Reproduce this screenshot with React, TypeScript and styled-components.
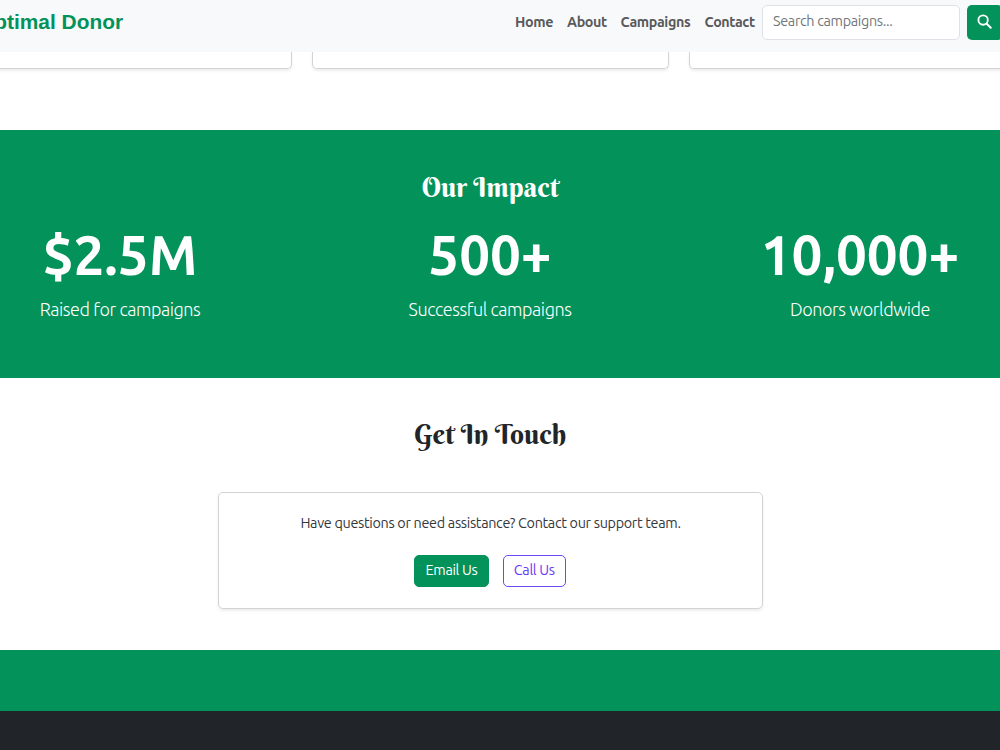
import React from "react";
import styled, { createGlobalStyle } from "styled-components";

const green = "#03925a";
const dark = "#212529";

const GlobalStyle = createGlobalStyle`
  *, *::before, *::after { box-sizing: border-box; }
  body {
    margin: 0;
    background: #fff;
    color: ${dark};
    font-family: "Ubuntu", "Open Sans", "Noto Sans", sans-serif;
    font-size: 14.4px;
    letter-spacing: -0.32px;
    overflow: hidden;
  }
`;

const Page = styled.div`
  display: flex;
  flex-direction: column;
  height: 750px;
  overflow: hidden;
`;

const Navbar = styled.header`
  display: flex;
  align-items: flex-start;
  justify-content: space-between;
  flex: none;
  width: 1003px;
  height: 51.5px;
  padding-top: 5px;
  background: #f8f9fb;
`;

const Brand = styled.a`
  margin-left: -22px;
  color: ${green};
  font: 700 20.9px/34px "Liberation Sans", Arial, sans-serif;
  letter-spacing: 0;
  white-space: nowrap;
`;

const NavTools = styled.div`
  display: flex;
  align-items: center;
  height: 34.5px;
`;

const NavLinks = styled.nav`
  display: flex;
  gap: 14px;
  margin-right: 7px;
`;

const NavLink = styled.a<{ $width: number }>`
  width: ${(p) => p.$width}px;
  color: #595a5c;
  font-weight: 700;
  font-size: 14.3px;
  letter-spacing: -0.37px;
  line-height: 34px;
  white-space: nowrap;
`;

const SearchInput = styled.input`
  width: 198px;
  height: 34.5px;
  margin-right: 7px;
  padding: 0 10px 2px;
  border: 1px solid #dee2e6;
  border-radius: 5px;
  background: #fff;
  font: inherit;
  letter-spacing: -0.33px;
  &::placeholder { color: #72777b; opacity: 1; }
`;

const SearchButton = styled.button`
  display: grid;
  place-items: center;
  width: 36px;
  height: 34.5px;
  padding: 0 1px 2px 0;
  border: 0;
  border-radius: 5px;
  background: ${green};
  color: #fff;
`;

const CampaignRow = styled.section`
  display: grid;
  grid-template-columns: repeat(3, 356.5px);
  gap: 20.5px;
  flex: none;
  height: 78.5px;
  margin-left: -64.8px;
`;

const CampaignCard = styled.article`
  height: 17.5px;
  border: 1px solid #d3d3d4;
  border-top: 0;
  border-radius: 0 0 5px 5px;
  box-shadow: 0 2px 3px rgba(0, 0, 0, 0.075);
`;

const Impact = styled.section`
  flex: none;
  height: 247.5px;
  padding-top: 41px;
  background: ${green};
  color: #fff;
`;

const Heading = styled.h2`
  width: 980.5px;
  margin: 0;
  font: 400 27.4px/33px "Berkshire Swash", "Liberation Serif", "Times New Roman", serif;
  letter-spacing: 0;
  text-align: center;
`;

const Stats = styled.div`
  display: grid;
  grid-template-columns: repeat(3, 370px);
  width: 1110px;
  margin: 16px 0 0 -65px;
  text-align: center;
`;

const StatValue = styled.div`
  font-size: 54.7px;
  font-weight: 700;
  letter-spacing: 0;
  line-height: 70px;
`;

const StatLabel = styled.div`
  margin-top: 6px;
  font-size: 18px;
  font-weight: 300;
  letter-spacing: -0.42px;
  line-height: 26px;
`;

const ContactSection = styled.section`
  flex: none;
  height: 272.5px;
  padding-top: 40.3px;
`;

const ContactCard = styled.div`
  display: flex;
  flex-direction: column;
  align-items: center;
  width: 545px;
  height: 117px;
  margin: 41.2px 0 0 218px;
  padding-top: 19px;
  border: 1px solid #d3d3d4;
  border-radius: 5px;
  box-shadow: 0 2px 3px rgba(0, 0, 0, 0.075);
`;

const ContactText = styled.p`
  margin: 0;
  color: #34383c;
  line-height: 22px;
  white-space: nowrap;
`;

const ButtonRow = styled.div`
  display: flex;
  gap: 13.5px;
  margin: 21px 1px 0 0;
`;

const ActionButton = styled.button<{ $outline?: boolean }>`
  display: flex;
  align-items: center;
  justify-content: center;
  width: ${(p) => (p.$outline ? 63.5 : 75)}px;
  height: 32px;
  padding: 0 0 1px;
  border: 1px solid ${(p) => (p.$outline ? "#6d49f5" : green)};
  border-radius: 5px;
  background: ${(p) => (p.$outline ? "#fff" : green)};
  color: ${(p) => (p.$outline ? "#6d38f2" : "#fff")};
  font: inherit;
  letter-spacing: -0.33px;
  white-space: nowrap;
`;

const GreenBand = styled.section`
  flex: none;
  height: 61.4px;
  background: ${green};
`;

const Footer = styled.footer`
  flex: 1;
  background: ${dark};
`;

const stats = [
  { value: "$2.5M", label: "Raised for campaigns" },
  { value: "500+", label: "Successful campaigns" },
  { value: "10,000+", label: "Donors worldwide" },
];

const links = [
  { label: "Home", width: 38 },
  { label: "About", width: 39.5 },
  { label: "Campaigns", width: 70 },
  { label: "Contact", width: 50.5 },
];

export default function App() {
  return (
    <Page>
      <GlobalStyle />
      <Navbar>
        <Brand>Optimal Donor</Brand>
        <NavTools>
          <NavLinks>
            {links.map((l) => (
              <NavLink key={l.label} $width={l.width}>{l.label}</NavLink>
            ))}
          </NavLinks>
          <SearchInput placeholder="Search campaigns..." />
          <SearchButton aria-label="Search">
            <svg width="15" height="15" viewBox="0 0 16 16" fill="none" stroke="currentColor" strokeLinecap="round">
              <circle cx="6.5" cy="6.5" r="5" strokeWidth="2" />
              <path d="M10.4 10.4 14.6 14.6" strokeWidth="2.2" />
            </svg>
          </SearchButton>
        </NavTools>
      </Navbar>
      <CampaignRow>
        <CampaignCard />
        <CampaignCard />
        <CampaignCard />
      </CampaignRow>
      <Impact>
        <Heading>Our Impact</Heading>
        <Stats>
          {stats.map((s) => (
            <div key={s.label}>
              <StatValue>{s.value}</StatValue>
              <StatLabel>{s.label}</StatLabel>
            </div>
          ))}
        </Stats>
      </Impact>
      <ContactSection>
        <Heading>Get In Touch</Heading>
        <ContactCard>
          <ContactText>Have questions or need assistance? Contact our support team.</ContactText>
          <ButtonRow>
            <ActionButton>Email Us</ActionButton>
            <ActionButton $outline>Call Us</ActionButton>
          </ButtonRow>
        </ContactCard>
      </ContactSection>
      <GreenBand />
      <Footer />
    </Page>
  );
}
